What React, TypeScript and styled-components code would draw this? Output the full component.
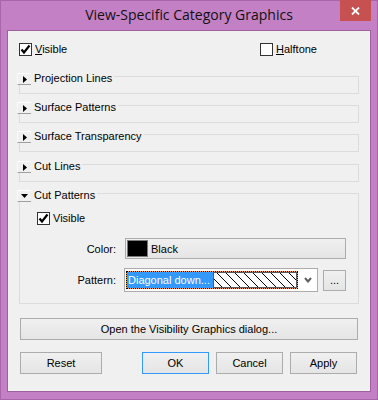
import styled, { createGlobalStyle } from 'styled-components';

const GlobalStyle = createGlobalStyle`
    html, body {
        margin: 0;
        padding: 0;
        background: #c480c4;
    }
`;

const Window = styled.div`
    width: 378px;
    height: 400px;
    box-sizing: border-box;
    display: flex;
    flex-direction: column;
    padding: 0 7px 8px;
    background: #c480c4;
    box-shadow: inset 0 0 0 1px #a865a8;
    font-family: 'Liberation Sans', Arial, sans-serif;
    font-size: 11px;
    color: #000;
`;

const TitleBar = styled.div`
    height: 30px;
    display: grid;
    grid-template-columns: 1fr auto 1fr;
`;

const Title = styled.div`
    grid-column: 2;
    font-family: 'Open Sans', 'Noto Sans', sans-serif;
    font-size: 14px;
    line-height: 30px;
    color: #111;
    white-space: nowrap;
`;

const CloseButton = styled.div`
    justify-self: end;
    align-self: start;
    width: 31px;
    height: 21px;
    background: #c75050;
    display: flex;
    align-items: center;
    justify-content: center;
`;

const Client = styled.div`
    flex: 1;
    display: flex;
    flex-direction: column;
    border: 1px solid #a060a0;
    background: #f0f0f0;
    padding: 12px 11px 0;
`;

const TopRow = styled.div`
    display: grid;
    grid-template-columns: 241px auto;
`;

const CheckLabel = styled.label<{ $indent?: number }>`
    display: flex;
    align-items: center;
    gap: 3px;
    height: 13px;
    line-height: 13px;
    margin-left: ${p => p.$indent || 0}px;
`;

const Box = styled.span`
    width: 13px;
    height: 13px;
    box-sizing: border-box;
    border: 1px solid #333;
    background: #fff;
    display: flex;
    align-items: center;
    justify-content: center;
`;

const Group = styled.div<{ $gap: number }>`
    margin-top: ${p => p.$gap}px;
    border: 1px solid #dcdcdc;
`;

const GroupHead = styled.div`
    display: flex;
    align-items: flex-start;
    gap: 3px;
    width: fit-content;
    height: 14px;
    margin: -6px 0 0 -3px;
    padding-right: 2px;
    background: #f0f0f0;
    line-height: 14px;
`;

const Toggle = styled.span`
    width: 14px;
    height: 12px;
    margin-top: 2px;
    box-sizing: border-box;
    border-top: 1px solid #fff;
    border-left: 1px solid #fafafa;
    border-bottom: 1px solid #a0a0a0;
    display: flex;
    align-items: center;
    justify-content: center;
`;

const Collapsed = styled.div`
    height: 8px;
`;

const GroupBody = styled.div`
    padding: 0 12px 11px 0;
`;

const BodyCheck = styled.div`
    margin-top: 10px;
`;

const FormGrid = styled.div`
    display: grid;
    grid-template-columns: 96px 1fr;
    column-gap: 8px;
    row-gap: 9px;
    margin-top: 13px;
    align-items: center;
`;

const FieldLabel = styled.span`
    text-align: right;
`;

const PushButton = styled.button<{ $default?: boolean }>`
    box-sizing: border-box;
    height: 22px;
    padding: 0;
    border: 1px solid ${p => (p.$default ? '#3399ff' : '#acacac')};
    background: linear-gradient(#f0f0f0, #e5e5e5);
    font: inherit;
    color: #000;
`;

const ColorButton = styled(PushButton)`
    height: 21px;
    margin-left: 1px;
    display: flex;
    align-items: center;
    gap: 3px;
    padding: 0 1px;
    text-align: left;
`;

const Swatch = styled.span`
    width: 21px;
    height: 17px;
    box-sizing: border-box;
    border: 1px solid #7a7a7a;
    background: #000;
`;

const PatternRow = styled.div`
    display: flex;
    align-items: center;
    gap: 5px;
`;

const Combo = styled.div`
    width: 194px;
    height: 24px;
    box-sizing: border-box;
    border: 1px solid #acacac;
    background: #fff;
    display: flex;
    align-items: center;
    padding: 0 0 0 1px;
`;

const Selection = styled.div`
    width: 172px;
    height: 18px;
    box-sizing: border-box;
    border: 1px dotted #000;
    background: linear-gradient(#3399ff, #3399ff) padding-box, #f7a233 border-box;
    display: flex;
    align-items: center;
    color: #fff;
    line-height: 16px;
`;

const SelectionText = styled.span`
    flex: 1;
    padding-left: 1px;
    white-space: nowrap;
`;

const Chevron = styled.span`
    flex: 1;
    display: flex;
    justify-content: center;
    padding-left: 1px;
`;

const DotsButton = styled(PushButton)`
    width: 23px;
    height: 21px;
    line-height: 14px;
`;

const WideButton = styled(PushButton)`
    margin: 14px 1px 0;
`;

const ButtonRow = styled.div`
    display: flex;
    margin: 12px 2px 0 1px;
    gap: 7px;
`;

const ActionButton = styled(PushButton)<{ $width: number }>`
    width: ${p => p.$width}px;
    &:first-child {
        margin-right: auto;
    }
`;

const Check = () => (
    <svg width="11" height="11" viewBox="0 0 11 11">
        <polyline points="1.5,5.5 4,8.5 9.5,1.5" fill="none" stroke="#000" strokeWidth="2.2" />
    </svg>
);

const Arrow = ({ open }: { open?: boolean }) =>
    open ? (
        <svg width="7" height="4" viewBox="0 0 7 4">
            <polygon points="0,0 7,0 3.5,4" fill="#000" />
        </svg>
    ) : (
        <svg width="4" height="7" viewBox="0 0 4 7">
            <polygon points="0,0 4,3.5 0,7" fill="#000" />
        </svg>
    );

const Hatch = () => {
    const lines = [];
    for (let x = -14; x < 84; x += 9) lines.push(x);
    return (
        <svg width="84" height="16" viewBox="0 0 84 16" style={{ display: 'block' }}>
            <rect x="0.5" y="0.5" width="83" height="15" fill="#fff" stroke="#5a5a5a" />
            <g stroke="#000" strokeWidth="1" clipPath="url(#hatchClip)">
                {lines.map(x => (
                    <line key={x} x1={x} y1={1} x2={x + 14} y2={15} />
                ))}
            </g>
            <clipPath id="hatchClip">
                <rect x="1" y="1" width="82" height="14" />
            </clipPath>
        </svg>
    );
};

const sections = [
    { name: 'Projection Lines', gap: 20 },
    { name: 'Surface Patterns', gap: 11 },
    { name: 'Surface Transparency', gap: 11 },
    { name: 'Cut Lines', gap: 12 },
];

const CheckBox = ({ checked, children, indent }: { checked?: boolean; children: React.ReactNode; indent?: number }) => (
    <CheckLabel $indent={indent}>
        <Box>{checked && <Check />}</Box>
        <span>{children}</span>
    </CheckLabel>
);

export default function App() {
    return (
        <Window>
            <GlobalStyle />
            <TitleBar>
                <Title>View-Specific Category Graphics</Title>
                <CloseButton>
                    <svg width="9" height="8" viewBox="0 0 9 8">
                        <path d="M1 0.5 L8 7.5 M8 0.5 L1 7.5" stroke="#fff" strokeWidth="1.8" />
                    </svg>
                </CloseButton>
            </TitleBar>
            <Client>
                <TopRow>
                    <CheckBox checked>
                        <u>V</u>isible
                    </CheckBox>
                    <CheckBox>
                        <u>H</u>alftone
                    </CheckBox>
                </TopRow>

                {sections.map(s => (
                    <Group key={s.name} $gap={s.gap}>
                        <GroupHead>
                            <Toggle>
                                <Arrow />
                            </Toggle>
                            <span>{s.name}</span>
                        </GroupHead>
                        <Collapsed />
                    </Group>
                ))}

                <Group $gap={11}>
                    <GroupHead>
                        <Toggle>
                            <Arrow open />
                        </Toggle>
                        <span>Cut Patterns</span>
                    </GroupHead>
                    <GroupBody>
                        <BodyCheck>
                            <CheckBox checked indent={17}>
                                Visible
                            </CheckBox>
                        </BodyCheck>
                        <FormGrid>
                            <FieldLabel>Color:</FieldLabel>
                            <ColorButton>
                                <Swatch />
                                <span>Black</span>
                            </ColorButton>
                            <FieldLabel>Pattern:</FieldLabel>
                            <PatternRow>
                                <Combo>
                                    <Selection>
                                        <SelectionText>Diagonal down...</SelectionText>
                                        <Hatch />
                                    </Selection>
                                    <Chevron>
                                        <svg width="8" height="6" viewBox="0 0 8 6">
                                            <polyline points="1,1 4,4.5 7,1" fill="none" stroke="#606060" strokeWidth="2" />
                                        </svg>
                                    </Chevron>
                                </Combo>
                                <DotsButton>...</DotsButton>
                            </PatternRow>
                        </FormGrid>
                    </GroupBody>
                </Group>

                <WideButton>Open the Visibility Graphics dialog...</WideButton>
                <ButtonRow>
                    <ActionButton $width={82}>Reset</ActionButton>
                    <ActionButton $width={67} $default>
                        OK
                    </ActionButton>
                    <ActionButton $width={67}>Cancel</ActionButton>
                    <ActionButton $width={67}>Apply</ActionButton>
                </ButtonRow>
            </Client>
        </Window>
    );
}
